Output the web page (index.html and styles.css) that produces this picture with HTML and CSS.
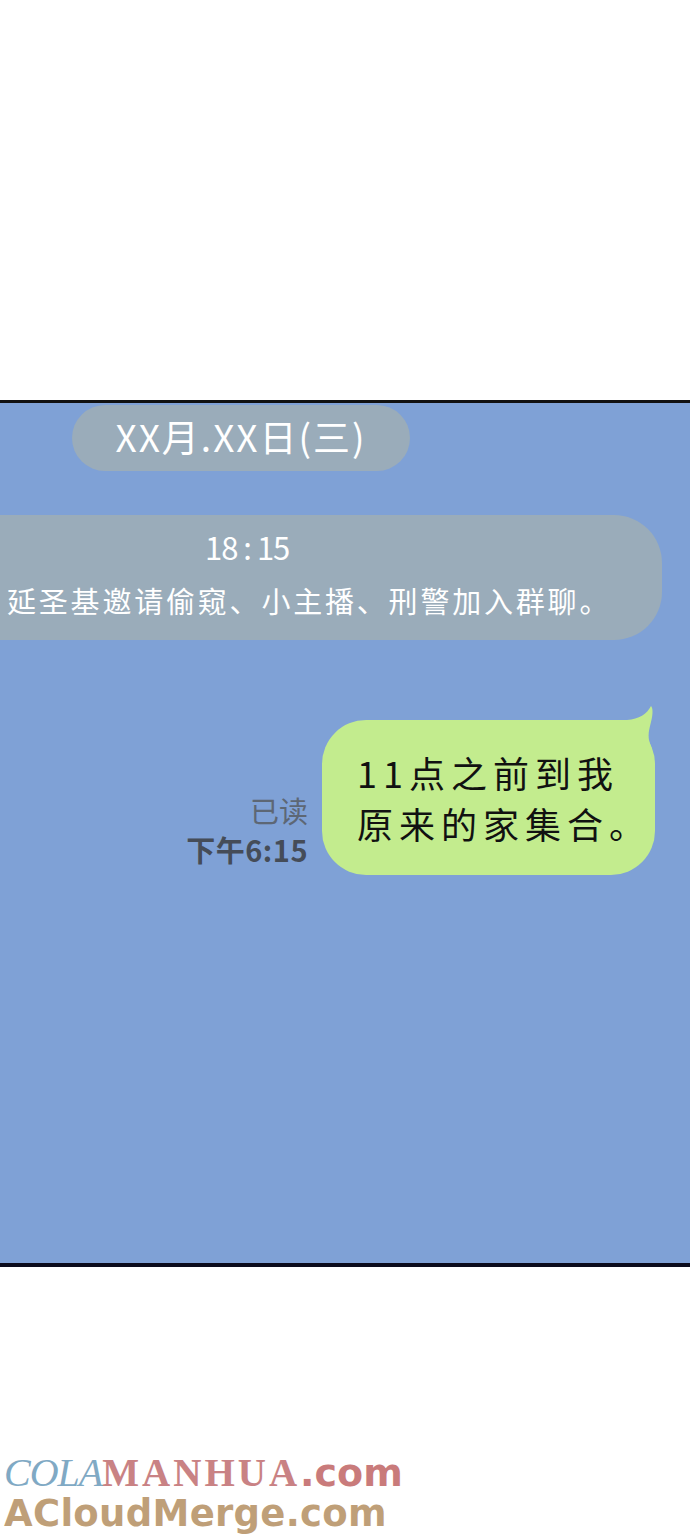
FILE: index.html
```html
<!DOCTYPE html>
<html lang="zh">
<head>
<meta charset="utf-8">
<link rel="stylesheet" href="styles.css">
</head>
<body>
<div class="top"></div>
<section class="panel">
  <div class="date-pill">XX月.XX日(三)</div>
  <div class="sys">
    <div class="sys-time">18 : 15</div>
    <div class="sys-text">延圣基邀请偷窥、小主播、刑警加入群聊。</div>
  </div>
  <div class="row">
    <div class="meta">
      <div class="read">已读</div>
      <div class="time">下午6:15</div>
    </div>
    <div class="bubble">
      <svg class="tail" width="60" height="70" viewBox="280 -16 60 70"><path d="M285 0 L305 0 C317 -1 325 -6 329 -14 C331 -12 331 -6 329 2 C327 10 326 14 327 20 C330 30 333 38 333 50 L285 50 Z" fill="#c3ec8e"/></svg>
      <p>11点之前到我<br>原来的家集合。</p>
    </div>
  </div>
</section>
<footer class="wm">
  <div class="wm1"><span class="cola">COLA</span><span class="manhua">MANHUA</span><span class="com">.com</span></div>
  <div class="wm2">ACloudMerge.com</div>
</footer>
</body>
</html>
```
FILE: styles.css
```css
html, body { margin: 0; padding: 0; background: #fff; }
body { width: 690px; height: 1538px; overflow: hidden; font-family: "Noto Sans CJK SC", "Noto Sans", sans-serif; }
.top { height: 400px; }
.panel {
  background: #7fa1d6;
  border-top: 3px solid #111;
  border-bottom: 4px solid #0b0b1c;
  height: 858px;
  box-sizing: content-box;
  padding-top: 2px;
  overflow: hidden;
}
.date-pill {
  margin-left: 72px;
  width: 338px;
  height: 66px;
  border-radius: 33px;
  background: #9aacba;
  color: #fff;
  font-size: 37px;
  line-height: 62px;
  text-align: center;
  letter-spacing: 2px;
}
.sys {
  margin-top: 44px;
  width: 662px;
  height: 125px;
  border-radius: 0 48px 48px 0;
  background: #9aacba;
  color: #fff;
  box-sizing: border-box;
  padding-top: 11px;
  padding-left: 7px;
}
.sys-time { padding-left: 198px; font-size: 31px; line-height: 42px; letter-spacing: -1px; }
.sys-text { font-size: 29px; line-height: 46px; margin-top: 9px; letter-spacing: 2.8px; }
.row {
  margin-top: 80px;
  display: flex;
  justify-content: flex-end;
  align-items: flex-end;
  padding-right: 35px;
}
.meta {
  text-align: right;
  margin-right: 14px;
  margin-bottom: 6px;
}
.read { color: #5d6775; font-size: 29px; line-height: 38px; }
.time { color: #454c58; font-size: 29px; font-weight: 700; line-height: 40px; letter-spacing: 0.5px; }
.bubble {
  position: relative;
  width: 333px;
  height: 155px;
  border-radius: 44px;
  background: #c3ec8e;
  box-sizing: border-box;
  padding: 27px 0 0 35px;
}
.bubble p {
  position: relative;
  margin: 0;
  color: #111;
  font-size: 36px;
  line-height: 51px;
  letter-spacing: 6px;
}
.tail { position: absolute; left: 280px; top: -16px; }
.wm { margin-top: 186px; padding-left: 4px; }
.wm1 { height: 40px; line-height: 40px; white-space: nowrap; }
.cola { font-family: "Liberation Serif", serif; font-style: italic; color: #80a9c4; font-size: 40px; letter-spacing: -1px; }
.manhua { font-family: "Liberation Serif", serif; font-weight: 700; color: #c98284; font-size: 39px; letter-spacing: 3px; }
.com { font-family: "DejaVu Sans", sans-serif; font-weight: 700; color: #c97b7b; font-size: 38px; }
.wm2 { font-family: "DejaVu Sans", sans-serif; font-weight: 700; color: #bf9f78; font-size: 37px; line-height: 42px; letter-spacing: 0.3px; }
```
